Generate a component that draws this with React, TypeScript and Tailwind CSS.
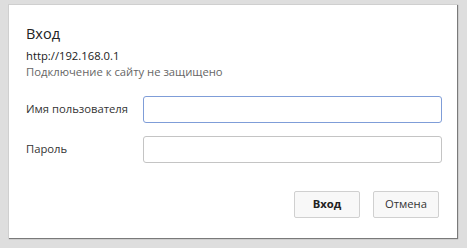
export default function App() {
  return (
    <div
      className="h-[248px] w-[467px] bg-[#dedede] pl-2 pt-1"
      style={{ fontFamily: '"Open Sans", "Noto Sans", sans-serif' }}
    >
      <div className="flex h-[234px] w-[449px] flex-col border-l border-t border-[#cfcfcf] bg-white pl-[17px] pr-[15px] shadow-[1px_1px_1px_rgba(0,0,0,0.45)]">
        <h1 className="mt-[19px] text-[14.5px] leading-5 text-[#222]">Вход</h1>
        <p className="mt-[4px] text-[11.25px] leading-4 text-[#222]">http://192.168.0.1</p>
        <p className="text-[11.25px] leading-4 text-[#666]">Подключение к сайту не защищено</p>

        <div className="mt-[16px] flex items-center">
          <label className="w-[117px] text-[11.25px] text-[#333]">Имя пользователя</label>
          <input className="h-[27px] flex-1 rounded-[3px] border border-[#7f9dd8] bg-white outline-none" />
        </div>
        <div className="mt-[13px] flex items-center">
          <label className="w-[117px] text-[11.25px] text-[#333]">Пароль</label>
          <input
            type="password"
            className="h-[27px] flex-1 rounded-[3px] border border-[#c4c4c4] bg-white outline-none"
          />
        </div>

        <div className="mt-[28px] flex justify-end gap-[13px] pr-[3px]">
          <button className="h-[27px] w-[66px] rounded-[2px] border border-[#d0d0d0] bg-[#f8f8f8] text-[11.25px] font-bold text-[#222]">
            Вход
          </button>
          <button className="h-[27px] w-[66px] rounded-[2px] border border-[#d0d0d0] bg-[#f8f8f8] text-[11.25px] text-[#333]">
            Отмена
          </button>
        </div>
      </div>
    </div>
  );
}
